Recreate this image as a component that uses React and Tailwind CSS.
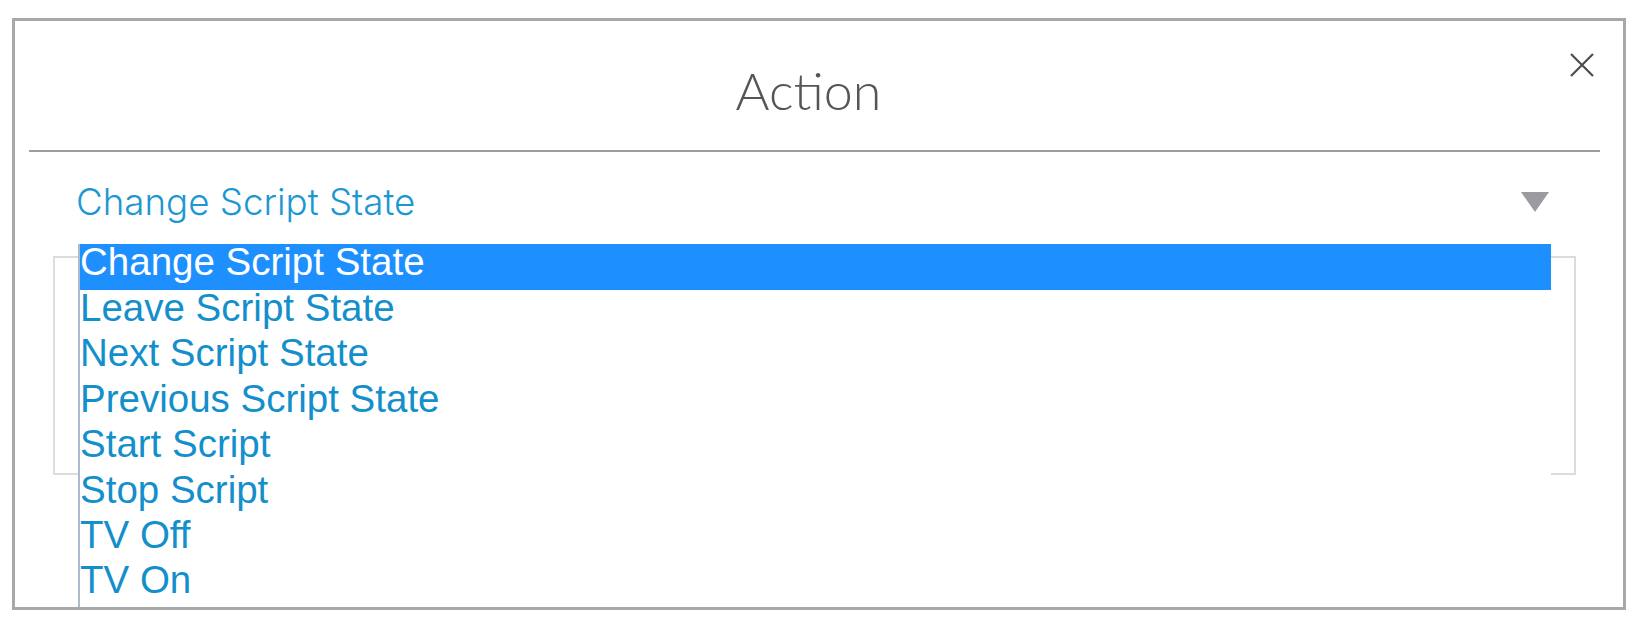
import { useState } from "react";

const actions = [
  "Change Script State",
  "Leave Script State",
  "Next Script State",
  "Previous Script State",
  "Start Script",
  "Stop Script",
  "TV Off",
  "TV On",
];

function CloseIcon() {
  return (
    <svg width="26" height="26" viewBox="0 0 26 26" fill="none" stroke="#4d4d4d" strokeWidth="2.2">
      <path d="M2 2 L24 24 M24 2 L2 24" />
    </svg>
  );
}

function Caret() {
  return (
    <svg width="28" height="20" viewBox="0 0 28 20">
      <polygon points="0,0 28,0 14,20" fill="#9b9ba0" />
    </svg>
  );
}

export default function App() {
  const [selected] = useState(0);

  return (
    <div className="w-[1637px] h-[627px] bg-white pl-[12px] pt-[18px]">
      <div className="relative w-[1614px] h-[592px] border-[3px] border-[#a8a8a8] overflow-hidden">
        {/* header */}
        <div className="ml-[14px] mr-[23px] h-[131px] flex items-center justify-center border-b-2 border-[#9d9d9d] pr-[12px] pt-[9px]">
          <h1 className="text-[52px] leading-none font-light text-[#555555] font-['Lato',sans-serif]">Action</h1>
        </div>
        <button className="absolute right-[28px] top-[31px]">
          <CloseIcon />
        </button>

        {/* select */}
        <div className="mt-[20px] h-[60px] ml-[61px] mr-[74px] flex items-center justify-between">
          <span className="text-[36.7px] leading-none font-light text-[#1d97d2] font-['Inter',sans-serif]">
            Change Script State
          </span>
          <Caret />
        </div>

        {/* box under the open list */}
        <div className="mt-[24px] ml-[38px] w-[1523px] h-[219px] border-2 border-[#dcdcdc]"></div>

        {/* open list */}
        <ul className="absolute left-[63px] top-[223px] w-[1473px] bottom-0 bg-white border-l-2 border-[#aebbcc] font-['Liberation_Sans',Arial,sans-serif] text-[38.5px] leading-[35.4px]">
          {actions.map((a, i) => (
            <li
              key={a}
              className={i === selected ? "bg-[#1e8fff] text-white h-[46px]" : "text-[#138fcb] h-[45.4px]"}
            >
              {a}
            </li>
          ))}
        </ul>
      </div>
    </div>
  );
}
